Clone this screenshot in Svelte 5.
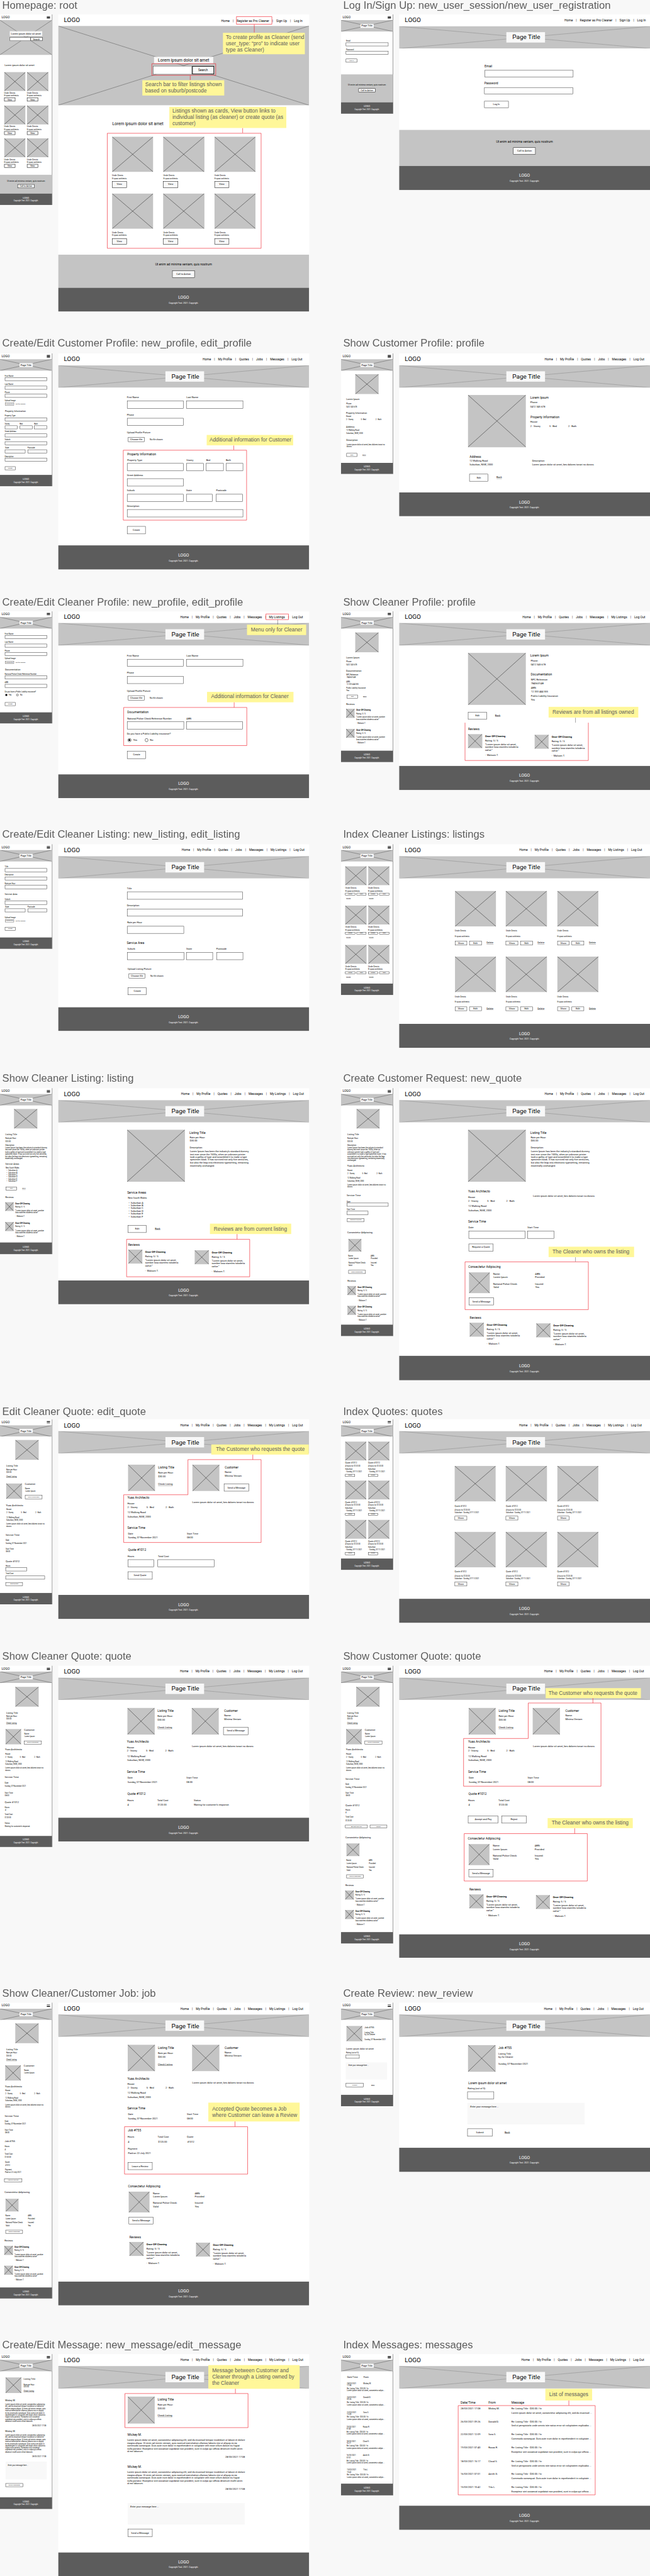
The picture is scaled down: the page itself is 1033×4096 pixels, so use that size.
<script lang="ts">
  // Drafting units: one column unit and one row unit in board pixels.
  const UX = 0.6378;

  const MENU_OUT = ['Home', 'Register as Pro Cleaner', 'Sign Up', 'Log In'];
  const MENU_CUSTOMER = ['Home', 'My Profile', 'Quotes', 'Jobs', 'Messages', 'Log Out'];
  const MENU_CLEANER = ['Home', 'My Profile', 'Quotes', 'Jobs', 'Messages', 'My Listings', 'Log Out'];

  // Cell builders: text, field, button, picture, text area, radio, nested stack.
  const T = (x, t, s = 's14', c = '') => ({ k: 't', x, t, s, c });
  const m = (x, t, s = 's10', c = '') => T(x, t, s, c);
  const F = (x, w, h = 23) => ({ k: 'f', x, w, h });
  const B = (x, w, h, t, s = 's14', c = '') => ({ k: 'b', x, w, h, t, s, c });
  const P = (x, w, h) => ({ k: 'p', x, w, h });
  const A = (x, w, h, s, pad, top) => ({ k: 'a', x, w, h, s, pad, top });
  const R = (x, on, small = false) => ({ k: 'r', x, on, small });
  const S = (x, rows) => ({ k: 's', x, rows });

  const QUOTE3 = '“Lorem ipsum dolor sit amet,\nsombre losa stamfes toloderia\ncafue.”';
  const QUOTE2 = '“Lorem ipsum dolor sit amet, sombre\nlosa stamfes toloderia cafue.”';
  const LOREM = 'Lorem ipsum dolor sit amet, bes dalores tonari no dororo.';
  const LOREM_M = 'Lorem ipsum dolor sit amet, bes dalores tonari no\ndororo.';
  const ABOUT = 'Lorem Ipsum has been the industry’s standard dummy\ntext ever since the 1500s, when an unknown printer\ntook a galley of type and scrambled it to make a type\nspecimen book. It has survived not only five centuries,\nbut also the leap into electronic typesetting, remaining\nessentially unchanged.';
  const ABOUT_N = 'Lorem Ipsum has been the industry’s standard\ndummy text ever since the 1500s, when an\nunknown printer took a galley of type and\nscrambled it to make a type specimen book. It has\nsurvived not only five centuries, but also the leap\ninto electronic typesetting, remaining essentially\nunchanged.';
  const MSG = 'Lorem ipsum dolor sit amet, consectetur adipiscing elit, sed do eiusmod tempor incididunt ut labore et dolore\nmagna aliqua. Ut enim ad minim veniam, quis nostrud exercitation ullamco laboris nisi ut aliquip ex ea\ncommodo consequat. Duis aute irure dolor in reprehenderit in voluptate velit esse cillum dolore eu fugiat\nnulla pariatur. Excepteur sint occaecat cupidatat non proident, sunt in culpa qui officia deserunt mollit anim\nid est laborum.';
  const MSG_M = 'Lorem ipsum dolor sit amet, consectetur adipiscing\nelit, sed do eiusmod tempor incididunt ut labore et\ndolore magna aliqua. Ut enim ad minim veniam, quis\nnostrud exercitation ullamco laboris nisi ut aliquip\nex ea commodo consequat. Duis aute irure dolor in\nreprehenderit in voluptate velit esse cillum dolore eu\nfugiat nulla pariatur. Excepteur sint occaecat\ncupidatat non proident, sunt in culpa qui officia\ndeserunt mollit anim id est laborum.';
  const SUBURBS = ['A', 'B', 'C', 'D', 'E', 'F'].map((l) => 'Suburban ' + l).join('\n');
  const DOTS = '•\n•\n•\n•\n•\n•';

  const reviewD = (x, y) => S(x, [
    [y, T(x, 'Once-Off Cleaning', 's14', 'bold')],
    [y + 13.5, T(x, 'Rating: 5 / 5')],
    [y + 25, T(x, QUOTE3)],
    [y + 58, T(x, '-  Malcom T.')]
  ]);
  const reviewsD = (x, y) => [
    [y, T(x, 'Reviews', 's18')],
    [y + 15, P(x, 68, 42), reviewD(x + 82, y + 22), S(x + 321, [[y + 17, P(x + 321, 68, 42)]]), reviewD(x + 403, y + 24)]
  ];
  const reviewsM = (x, y, step = 60) => [
    [y, m(x + 1, 'Reviews', 's13')],
    ...[0, step].map((d) => [y + 14 + d, P(x, 41, 27), S(x + 49, [
      [y + 18 + d, m(x + 49, 'Once-Off Cleaning', 's10', 'bold')],
      [y + 28 + d, m(x + 49, 'Rating: 5 / 5')],
      [y + 39.5 + d, m(x + 49, QUOTE2)],
      [y + 57 + d, m(x + 49, '-  Malcom T.')]
    ])])
  ];
  const listingHeadD = (x, y) => S(x, [
    [y, T(x, 'Listing Title', 's18')],
    [y + 17, T(x, 'Rate per Hour:')],
    [y + 28, T(x, '$30.00')],
    [y + 51, T(x, 'Check Listing', 's14', 'link')]
  ]);
  const partiesD = (x, y, button) => [
    [y, P(x, 131, 80), listingHeadD(x + 145, y + 9), P(x + 310, 131, 80), S(x + 463, [
      [y + 9, T(x + 467, 'Customer', 's18')],
      [y + 24, T(x + 467, 'Name:')],
      [y + 35, T(x + 467, 'Minima Veniam')],
      ...(button ? [[y + 58, B(x + 463, 120, 23, 'Send a Message')]] : [])
    ])]
  ];
  const propertyD = (x, y) => [
    [y, S(x, [
      [y, T(x, 'Yuas Architecto', 's18')],
      [y + 17.5, T(x, 'House')],
      [y + 29, T(x, '2 - Storey'), T(x + 92, '5 - Bed'), T(x + 184, '2 - Bath')],
      [y + 45, T(x + 1, '12 Walking Road')],
      [y + 57, T(x + 1, 'Suburban, NSW, 2000')]
    ]), S(x + 313, [[y + 14, T(x + 313, LOREM)]])]
  ];
  const serviceD = (x, y) => [
    [y, T(x, 'Service Time', 's18')],
    [y + 18.5, T(x + 3, 'Date'), T(x + 287, 'Start Time')],
    [y + 30.5, T(x + 3, 'Sunday, 07-November-2021'), T(x + 287, '08:00')]
  ];
  const cleanerD = (x, y) => [
    [y, T(x, 'Consectetur Adipiscing', 's18')],
    [y + 16.5, P(x + 3, 101, 63), S(x + 120, [
      [y + 22.5, T(x + 120, 'Name:'), T(x + 322, 'ABN:')],
      [y + 33, T(x + 121, 'Lorem Ipsum'), T(x + 322, 'Provided')],
      [y + 52.5, T(x + 120, 'National Police Check:'), T(x + 322, 'Insured:')],
      [y + 63, T(x + 121, 'Valid'), T(x + 323, 'Yes')]
    ])],
    [y + 93, B(x + 3, 120, 23, 'Send a Message')]
  ];
  const listingM = (x, y) => [
    [y, m(x, 'Listing Title', 's13')],
    [y + 11, m(x, 'Rate per Hour:')],
    [y + 19.5, m(x, '$30.00')],
    [y + 31.5, m(x, 'Check Listing', 's10', 'link')]
  ];
  const customerM = (x, y, button = true) => [
    [y, P(x, 76, 46), S(x + 90, [
      [y + 3, m(x + 90, 'Customer', 's14')],
      [y + 14.5, m(x + 91, 'Name:')],
      [y + 22.5, m(x + 92, 'Lorem Ipsum')],
      ...(button ? [[y + 35.5, B(x + 90, 84, 11, 'Send a Message', 's9')]] : [])
    ])]
  ];
  const propertyM = (x, y) => [
    [y, m(x, 'Yuas Architecto', 's14')],
    [y + 12, m(x + 1, 'House')],
    [y + 22, m(x + 1, '2 - Storey'), m(x + 72, '5 - Bed'), m(x + 141, '2 - Bath')],
    [y + 36, m(x + 1, '12 Walking Road')],
    [y + 43.5, m(x + 1, 'Suburban, NSW, 2000')],
    [y + 56, m(x + 1, LOREM_M)]
  ];
  const serviceM = (x, y) => [
    [y, m(x, 'Service Time', 's14')],
    [y + 16, m(x, 'Date')],
    [y + 25, m(x, 'Sunday, 07-November-2021')],
    [y + 42, m(x, 'Start Time')],
    [y + 50, m(x + 1, '08:00')]
  ];
  const cleanerM = (x, y) => [
    [y, m(x, 'Consectetur Adipiscing', 's14')],
    [y + 17.5, P(x + 5, 63, 39)],
    [y + 69, m(x + 4, 'Name:'), m(x + 112, 'ABN:')],
    [y + 77.5, m(x + 5, 'Lorem Ipsum'), m(x + 113, 'Provided')],
    [y + 90, m(x + 5, 'National Police Check:'), m(x + 113, 'Insured:')],
    [y + 98.5, m(x + 5, 'Valid'), m(x + 113, 'Yes')],
    [y + 112, B(x + 5, 83, 11, 'Send a Message', 's9')]
  ];
  const fieldM = (y, label, w = 205) => [[y, m(23, label)], [y + 5, F(23, w, 11)]];
  const uploadM = (y) => [
    [y, m(23, 'Upload Image')],
    [y + 6, B(25, 43, 8, 'Choose file', 's8', 'thin'), S(75, [[y + 10.5, m(75, 'No file chosen', 's9')]])]
  ];
  const uploadD = (x, y, label) => [
    [y, T(x, label)],
    [y + 13.5, B(x + 5, 80, 14, 'Choose file'), S(x + 110, [[y + 21, T(x + 110, 'No file chosen', 's12')]])]
  ];
  const stateM = (y) => [
    [y, m(24, 'State'), m(133, 'Postcode')],
    [y + 5, F(23, 100, 11), F(133, 95, 11)]
  ];
  const peopleD = (y) => [
    [y, T(613, 'First Name'), T(900, 'Last Name')],
    [y + 9.5, F(613, 274), F(899, 274)],
    [y + 51.5, T(613, 'Phone')],
    [y + 61, F(613, 274)],
    ...uploadD(613, y + 106, 'Upload Profile Picture')
  ];
  const cards = (xs, ys, make) => ys.map((y) => [y, ...xs.map((x) => S(x, make(x, y)))]);

  // Red outlines and connectors drawn over a frame.
  const rect = (x, y, r, b) => [x, y, r, y, r, b, x, b, x, y];
  const MESSAGES = [
    ['28/03/2021', '17:08', 'Mickey M.', 'Lorem ipsum dolor sit amet, consectetur adipiscing elit, sed do eiusmod ...', 1041, 960, 2],
    ['26/03/2021', '09:26', 'Donald D.', 'Sed ut perspiciatis unde omnis iste natus error sit voluptatem explicabo ...', 1081, 1005, 2],
    ['22/03/2021', '12:09', 'Sora S.', 'Commodo consequat. Duis aute irure dolor in reprehenderit in voluptate ...', 1122, 1051, 2],
    ['19/03/2021', '07:40', 'Roxas R.', 'Excepteur sint occaecat cupidatat non proident, sunt in culpa qui officia ...', 1163, 1097, 0],
    ['18/03/2021', '15:17', 'Cloud S.', 'Sed ut perspiciatis unde omnis iste natus error sit voluptatem explicabo ...', 1207, 1142, 0],
    ['16/03/2021', '07:01', 'Aerith G.', 'Commodo consequat. Duis aute irure dolor in reprehenderit in voluptate ...', 1247, 1188, 0],
    ['15/03/2021', '10:42', 'Tifa L.', 'Excepteur sint occaecat cupidatat non proident, sunt in culpa qui officia ...', 1288, 1233, 2]
  ];

  const sections = [
    {
      title: 'Homepage: root', drop: 27, y0: 43, right: false, home: true, menu: MENU_OUT, end: 1460,
      m: {
        foot: [584, 618], cta: 527,
        rows: [
          [197.5, m(22, 'Lorem ipsum dolor sit amet', 's14')],
          ...cards([20, 130], [217, 318, 417], (x, y) => [
            [y, P(x, 103, 57)],
            [y + 64, m(x, 'Unde Omnis', 's12')],
            [y + 72, m(x, 'Et quasi architecto.')],
            [y + 78, B(x, 54, 11, 'View', 's12', 'thick')]
          ])
        ]
      },
      d: {
        foot: [868, 940], cta: 768,
        rows: [
          [374, T(542, 'Lorem ipsum dolor sit amet', 's24')],
          ...cards([541, 788, 1035], [412, 584], (x, y) => [
            [y, P(x, 198, 106)],
            [y + 117.5, T(x, 'Unde Omnis', 's12')],
            [y + 126, T(x, 'Et quasi architecto.', 's10')],
            [y + 135, B(x, 71, 19, 'View', 's14', 'thick')]
          ])
        ],
        red: [rect(1141, 50, 1312, 73), [1227, 74, 1227, 98], rect(733, 192, 1041, 227), [918, 228, 918, 242], rect(518, 402, 1260, 749), [1171, 386, 1171, 401]],
        notes: [
          [1076, 99, 395, 65, 14, 'To create profile as Cleaner (send\nuser_type: “pro” to indicate user\ntype as Cleaner)'],
          [687, 242, 395, 46, 14, 'Search bar to filter listings shown\nbased on suburb/postcode'],
          [818, 322, 563, 64, 14, 'Listings shown as cards, View button links to\nindividual listing (as cleaner) or create quote (as\ncustomer)']
        ]
      }
    },
    {
      title: 'Log In/Sign Up: new_user_session/new_user_registration', drop: 27, y0: 42, right: true, menu: MENU_OUT, end: 1548,
      m: {
        foot: [308, 342], cta: 223,
        rows: [
          [123, m(102, 'Email')], [127, F(101, 205, 11)],
          [148, m(102, 'Password')], [153, F(101, 205, 11)],
          [176, B(101, 54, 11, 'Log In', 's9')]
        ]
      },
      d: {
        foot: [500, 572], cta: 391,
        rows: [
          [199, T(770, 'Email', 's18')], [211, F(770, 428, 21)],
          [251, T(769, 'Password', 's18')], [263, F(769, 428, 20)],
          [304, B(769, 117, 20, 'Log In')]
        ]
      }
    },
    {
      title: 'Create/Edit Customer Profile: new_profile, edit_profile', drop: 31.8, y0: 1066, right: false, menu: MENU_CUSTOMER, end: 1459,
      m: {
        foot: [1433, 1467],
        rows: [
          ...fieldM(1134, 'First Name'), ...fieldM(1159, 'Last Name'), ...fieldM(1184, 'Phone'), ...uploadM(1209),
          [1242, m(24, 'Property Information', 's13')],
          ...fieldM(1255, 'Property Type'),
          [1279, m(23, 'Storey'), m(95, 'Bed'), m(165, 'Bath')],
          [1284, F(23, 62, 11), F(95, 62, 11), F(165, 62, 11)],
          ...fieldM(1303, 'Street Address'), ...fieldM(1327, 'Suburb'), ...stateM(1351), ...fieldM(1377, 'Description'),
          [1407, B(23, 53, 11, 'Create', 's9')]
        ]
      },
      d: {
        foot: [1645, 1718],
        rows: [
          ...peopleD(1200),
          [1370, T(614, 'Property Information', 's18')],
          [1389, T(614, 'Property Type'), T(900, 'Storey'), T(995, 'Bed'), T(1090, 'Bath')],
          [1398, F(613, 274), F(900, 84), F(995, 84), F(1090, 83)],
          [1435, T(613, 'Street Address')], [1444, F(613, 274)],
          [1481, T(613, 'Suburb'), T(898, 'State'), T(1043, 'Postcode')],
          [1491, F(613, 274), F(898, 128), F(1043, 128)],
          [1528, T(613, 'Description')], [1537, F(613, 560)],
          [1588, B(613, 90, 23, 'Create')]
        ],
        red: [rect(595, 1358, 1190, 1569), [1128, 1344, 1128, 1357]],
        notes: [[997, 1312, 417, 32, 14, 'Additional information for Customer']]
      }
    },
    {
      title: 'Show Customer Profile: profile', drop: 31.8, y0: 1066, right: true, menu: MENU_CUSTOMER, end: 1541,
      m: {
        foot: [1396, 1430],
        rows: [
          [1129, P(146, 113, 60)],
          [1206, m(103, 'Lorem Ipsum', 's13')], [1218, m(103, 'Phone:')], [1227, m(103, '0412 345 678')],
          [1247, m(102, 'Property Information', 's13')], [1257, m(102, 'House')],
          [1266, m(102, '2 - Storey'), m(173, '5 - Bed'), m(244, '2 - Bath')],
          [1289, m(102, 'Address', 's13')], [1299, m(103, '12 Walking Road')], [1307.5, m(103, 'Suburban, NSW, 2000')],
          [1329, m(103, 'Description', 's13')], [1341, m(104, LOREM_M)],
          [1367, B(103, 53, 11, 'Edit', 's9'), S(181, [[1373, m(181, 'Back', 's9', 'link')]])]
        ]
      },
      d: {
        foot: [1486, 1557],
        rows: [
          [1192, P(690, 279, 157), S(991, [
            [1200, T(991, 'Lorem Ipsum', 's18')], [1216, T(991, 'Phone:')], [1227, T(991, '0412 345 678')],
            [1258, T(992, 'Property Information', 's18')], [1274, T(991, 'House')],
            [1286, T(991, '2 - Storey'), T(1083, '5 - Bed'), T(1174, '2 - Bath')]
          ])],
          [1378, T(698, 'Address', 's18')],
          [1392, T(698, '12 Walking Road'), T(1000, 'Description')],
          [1402.5, T(698, 'Suburban, NSW, 2000'), T(1000, LOREM)],
          [1430, B(697, 91, 22, 'Edit'), S(828, [[1441, T(828, 'Back', 's14', 'link')]])]
        ]
      }
    },
    {
      title: 'Create/Edit Cleaner Profile: new_profile, edit_profile', drop: 28.6, y0: 276, right: false, menu: MENU_CLEANER, end: 1462,
      m: {
        foot: [581, 615],
        rows: [
          ...fieldM(344, 'First Name'), ...fieldM(369, 'Last Name'), ...fieldM(395, 'Phone'), ...uploadM(420),
          [452, m(24, 'Documentation', 's13')],
          ...fieldM(465.5, 'National Police Check Reference Number'), ...fieldM(491, 'ABN'),
          [518.5, m(23, 'Do you have a Public Liability insurance?')],
          [529, R(25, true, true), m(42, 'Yes'), R(79, false, true), m(97, 'No')],
          [551, B(23, 53, 11, 'Create', 's9')]
        ]
      },
      d: {
        foot: [768, 840],
        rows: [
          ...peopleD(411),
          [580, T(614, 'Documentation', 's18')],
          [600, T(614, 'National Police Check Reference Number'), T(900, 'ABN')],
          [609, F(614, 274), F(900, 271)],
          [646, T(613, 'Do you have a Public Liability insurance?')],
          [665, R(617, true), T(643, 'Yes'), R(699, false), T(724, 'No')],
          [698, B(614, 91, 23, 'Create')]
        ],
        red: [rect(1283, 284, 1392, 301), rect(597, 566, 1191, 681), [1130, 550, 1130, 566]],
        lead: [[1340, 301, 1340, 317]],
        notes: [
          [1192, 317, 285, 31, 19, 'Menu only for Cleaner'],
          [999, 519, 417, 32, 20, 'Additional information for Cleaner']
        ]
      }
    },
    {
      title: 'Show Cleaner Profile: profile', drop: 28.6, y0: 276, right: true, menu: MENU_CLEANER, end: 1545,
      m: {
        foot: [697, 731],
        rows: [
          [340, P(146, 113, 60)],
          [417, m(103, 'Lorem Ipsum', 's13')], [429, m(103, 'Phone:')], [437, m(103, '0412 345 678')],
          [457, m(102, 'Documentation', 's13')], [469, m(103, 'NPC Reference:')], [477, m(104, '7845631AB')],
          [489, m(103, 'ABN:')], [497, m(104, '12 333 444 555')],
          [508, m(103, 'Public Liability Insurance:')], [515.5, m(103, 'Yes')],
          [528, B(106, 53, 11, 'Edit', 's9'), S(184, [[534, m(184, 'Back', 's9', 'link')]])],
          ...reviewsM(102, 557)
        ]
      },
      d: {
        foot: [743, 815],
        rows: [
          [402, P(691, 279, 157), S(991, [
            [411, T(991, 'Lorem Ipsum', 's18')], [426, T(993, 'Phone:')], [437, T(993, '0412 345 678')],
            [468, T(993, 'Documentation', 's18')], [483, T(994, 'NPC Reference:')], [494, T(994, '7845631AB')],
            [509, T(994, 'ABN:')], [519, T(995, '12 333 444 555')],
            [533, T(994, 'Public Liability Insurance:')], [544, T(994, 'Yes')]
          ])],
          [580, B(691, 90, 23, 'Edit'), S(821, [[591, T(821, 'Back', 's14', 'link')]])],
          ...reviewsD(691, 632)
        ],
        red: [[676, 612, 676, 726, 1271, 726, 1271, 612]],
        lead: [[1209, 597, 1209, 612]],
        notes: [[1079, 565, 433, 32, 19, 'Reviews are from all listings owned']]
      }
    },
    {
      title: 'Create/Edit Cleaner Listing: new_listing, edit_listing', drop: 32, y0: 979, right: false, menu: MENU_CLEANER, end: 1469,
      m: {
        foot: [1260, 1295],
        rows: [
          ...fieldM(1047, 'Title'), ...fieldM(1072, 'Description'), ...fieldM(1098, 'Rate per Hour'),
          [1131, m(23, 'Service Area', 's13')],
          ...fieldM(1145, 'Suburb'), ...stateM(1168), ...uploadM(1200),
          [1229, B(23, 53, 11, 'Create', 's9')]
        ]
      },
      d: {
        foot: [1471, 1543],
        rows: [
          [1113, T(613, 'Title')], [1122.5, F(613, 558)],
          [1164.5, T(613, 'Description')], [1174, F(613, 558)],
          [1216, T(614, 'Rate per Hour')], [1226, F(614, 274)],
          [1277.5, T(612, 'Service Area', 's18')],
          [1296, T(615, 'Suburb'), T(899, 'State'), T(1044, 'Postcode')],
          [1305, F(615, 274), F(899, 129), F(1044, 129)],
          ...uploadD(616, 1356, 'Upload Listing Picture'),
          [1411, B(617, 91, 23, 'Create')]
        ]
      }
    },
    {
      title: 'Index Cleaner Listings: listings', drop: 32, y0: 979, right: true, menu: MENU_CLEANER, end: 1530,
      m: {
        foot: [1399, 1434],
        rows: cards([98, 208], [1046, 1164, 1283], (x, y) => [
          [y, P(x, 103, 57)],
          [y + 65, m(x, 'Unde Omnis', 's12')],
          [y + 74, m(x, 'Et quasi architecto.')],
          [y + 80.5, B(x, 48, 7.5, 'Show', 's9'), B(x + 54, 48, 7.5, 'Edit', 's9')],
          [y + 96.5, m(x + 5, 'Delete', 's9', 'link')]
        ])
      },
      d: {
        foot: [1521, 1593],
        rows: cards([627, 873, 1121], [1120, 1318], (x, y) => [
          [y, P(x, 198, 107)],
          [y + 121.5, T(x, 'Unde Omnis', 's12')],
          [y + 137.5, T(x, 'Et quasi architecto.', 's10')],
          [y + 151, B(x, 59, 13, 'Show'), B(x + 70, 59, 13, 'Edit'), S(x + 153, [[y + 157.5, T(x + 153, 'Delete', 's14', 'link')]])]
        ])
      }
    },
    {
      title: 'Show Cleaner Listing: listing', drop: 30.6, y0: 147, right: false, menu: MENU_CLEANER, end: 1466,
      m: {
        foot: [613, 648],
        rows: [
          [210, P(68, 113, 59)],
          [287, m(26, 'Listing Title', 's13')], [299, m(26, 'Rate per Hour:')], [308, m(26, '$30.00')],
          [319, m(26, 'Description:')], [327, m(25, ABOUT)],
          [377, m(26, 'Service Areas', 's13')], [388, m(27, 'New South Wales')],
          [396, m(32, DOTS, 's10'), m(40, SUBURBS)],
          [445, B(28, 54, 11, 'Edit', 's9'), S(107, [[450.5, m(107, 'Back', 's9', 'link')]])],
          ...reviewsM(25, 477)
        ]
      },
      d: {
        foot: [727, 799],
        rows: [
          [272, P(614, 279, 157), S(914, [
            [281, T(914, 'Listing Title', 's18')], [296.5, T(916, 'Rate per Hour:')], [307.5, T(916, '$30.00')],
            [326.5, T(916, 'Description:')], [338.5, T(917, ABOUT)]
          ])],
          [462, T(614, 'Service Areas', 's18')],
          [479, T(617, 'New South Wales')],
          [493, T(621, DOTS), T(631, SUBURBS)],
          [561, B(617, 91, 22, 'Edit'), S(748, [[571.5, T(748, 'Back', 's14', 'link')]])],
          ...reviewsD(619, 619.5)
        ],
        red: [rect(611, 603, 1205, 716), [1144, 587, 1144, 603]],
        notes: [[1013, 556, 392, 31, 19, 'Reviews are from current listing']]
      }
    },
    {
      title: 'Create Customer Request: new_quote', drop: 30.6, y0: 147, right: true, menu: MENU_CUSTOMER, end: 1541,
      m: {
        foot: [860, 895],
        rows: [
          [210, P(152, 112, 59)],
          [287, m(108, 'Listing Title', 's13')], [299, m(108, 'Rate per Hour:')], [308, m(108, '$30.00')],
          [319, m(108, 'Description:')], [327, m(108, ABOUT_N)],
          ...propertyM(107, 383),
          [472, m(105, 'Service Time', 's14')],
          [489, m(105, 'Date')], [493, F(105, 201, 11)],
          [514, m(105, 'Start Time')], [518, F(105, 103, 11)],
          [540, B(107, 83, 11, 'Request a Quote', 's9')],
          ...cleanerM(108, 584),
          ...reviewsM(108, 730)
        ]
      },
      d: {
        foot: [955, 1028],
        rows: [
          [272, P(691, 279, 157), S(991, [
            [281, T(991, 'Listing Title', 's18')], [296.5, T(993, 'Rate per Hour:')], [307.5, T(993, '$30.00')],
            [326.5, T(993, 'Description:')], [338.5, T(994, ABOUT)]
          ])],
          ...propertyD(691, 459),
          [550, T(691, 'Service Time', 's18')],
          [568, T(693, 'Date'), T(977, 'Start Time')],
          [577.5, F(693, 274), F(977, 129)],
          [616, B(693, 120, 23, 'Request a Quote')],
          ...cleanerD(692, 686),
          ...reviewsD(699, 839.5)
        ],
        red: [rect(676, 671, 1271, 815)],
        lead: [[1209, 657, 1209, 670]],
        notes: [[1079, 625, 412, 32, 19, 'The Cleaner who owns the listing']]
      }
    },
    {
      title: 'Edit Cleaner Quote: edit_quote', drop: 24.4, y0: 1146, right: false, menu: MENU_CLEANER, end: 1462,
      m: {
        foot: [1670, 1704],
        rows: [
          [1208, P(73, 113, 60)],
          ...listingM(30, 1287), ...customerM(30, 1340), ...propertyM(29, 1406.5), ...serviceM(27, 1496),
          [1575, m(27, 'Quote #1012', 's14')],
          [1589, m(27, 'Hours')], [1593, F(27, 103, 11)],
          [1613, m(27, 'Total Cost')], [1618, F(27, 190, 11)],
          [1639, B(27, 83, 10, 'Send Quote', 's9')]
        ]
      },
      d: {
        foot: [1676, 1748],
        rows: [
          ...partiesD(618, 1282.5, true), ...propertyD(615, 1383), ...serviceD(615, 1473.5),
          [1540, T(618, 'Quote #1012', 's18')],
          [1560, T(616, 'Hours'), T(762, 'Total Cost')],
          [1569.5, F(616, 128, 22), F(761, 274, 22)],
          [1605.5, B(616, 120, 23, 'Send Quote')]
        ],
        red: [[597, 1374, 907, 1374, 907, 1268, 1260, 1268, 1260, 1518, 597, 1518, 597, 1374], [1220, 1252, 1220, 1268]],
        notes: [[1019, 1222, 471, 30, 23, 'The Customer who requests the quote']]
      }
    },
    {
      title: 'Index Quotes: quotes', drop: 24.4, y0: 1146, right: true, menu: MENU_CLEANER, end: 1529,
      m: {
        foot: [1566, 1600],
        rows: cards([97, 208], [1213, 1331, 1449], (x, y) => [
          [y, P(x, 103, 57)],
          [y + 65.5, m(x, 'Quote #1012', 's12')],
          [y + 74, m(x, '4 hours for $120.00')],
          [y + 82.5, m(x, 'Suburban')],
          [y + 91, m(x + 2, '- Sunday, 07/11/2021')],
          [y + 98.5, B(x, 48, 7.5, 'Show', 's9')]
        ])
      },
      d: {
        foot: [1688, 1760],
        rows: cards([626, 873, 1121], [1287, 1486], (x, y) => [
          [y, P(x, 198, 107)],
          [y + 120.5, T(x, 'Quote #1012', 's12')],
          [y + 132, T(x, '4 hours for $120.00', 's10')],
          [y + 140.5, T(x, 'Suburban - Sunday, 07/11/2021', 's10')],
          [y + 151, B(x, 59, 12, 'Show')]
        ])
      }
    },
    {
      title: 'Show Cleaner Quote: quote', drop: 30, y0: 321.5, right: false, menu: MENU_CLEANER, end: 1461,
      m: {
        foot: [835, 868],
        rows: [
          [385, P(73, 113, 60)],
          ...listingM(30, 463.5), ...customerM(26, 512.5), ...propertyM(24, 575),
          ...serviceM(23, 659.5).slice(0, 3),
          [706, m(23, 'Start Time')], [713, m(23, '08:00')],
          [735, m(23, 'Quote #1012', 's14')],
          [750, m(23, 'Hours')], [758, m(24, '4')],
          [771, m(23, 'Total Cost')], [781, m(23, '$120.00')],
          [797, m(23, 'Status')], [807, m(23, 'Waiting for customer’s response.')]
        ]
      },
      d: {
        foot: [780, 852],
        rows: [
          ...partiesD(615, 449, true), ...propertyD(613, 551), ...serviceD(613, 642),
          [708, T(615, 'Quote #1012', 's18')],
          [729, T(614, 'Hours'), T(759, 'Total Cost'), T(935, 'Status')],
          [742, T(615, '4'), T(761, '$120.00'), T(935, 'Waiting for customer’s response.')]
        ]
      }
    },
    {
      title: 'Show Customer Quote: quote', drop: 30, y0: 321.5, right: true, menu: MENU_CUSTOMER, end: 1539,
      m: {
        foot: [1125, 1159],
        rows: [
          [385, P(150, 113, 60)],
          ...listingM(107, 463.5), ...customerM(102, 512.5), ...propertyM(101, 575),
          [664, m(99, 'Service Time', 's14')], [680, m(99, 'Date')], [689, m(99, 'Sunday, 07-November-2021')],
          [706, m(99, 'Start Time')], [714, m(100, '08:00')],
          [743, m(99, 'Quote #1012', 's14')],
          [757, m(99, 'Hours')], [765, m(99, '4')],
          [779, m(99, 'Total Cost')], [789, m(99, '$120.00')],
          [802, B(98, 108, 10, 'Accept and Pay', 's9'), B(216, 84, 10, 'Reject', 's9')],
          ...cleanerM(99, 840),
          ...reviewsM(98, 986, 59)
        ]
      },
      d: {
        foot: [1132, 1203],
        rows: [
          ...partiesD(693, 449, false), ...propertyD(691, 551), ...serviceD(691, 642),
          [708, T(693, 'Quote #1012', 's18')],
          [729, T(691, 'Hours'), T(837, 'Total Cost')],
          [742.5, T(693, '4'), T(839, '$120.00')],
          [774, B(690, 147, 23, 'Accept and Pay'), B(852, 121, 23, 'Reject')],
          ...cleanerD(690, 843.5),
          ...reviewsD(697, 997)
        ],
        red: [[669, 541, 981, 541, 981, 434, 1332, 434, 1332, 685, 669, 685, 669, 541], [1293, 419, 1293, 434], rect(672, 828, 1266, 971), [1205, 812, 1205, 828]],
        notes: [
          [1065, 389, 459, 31, 14, 'The Customer who requests the quote'],
          [1074, 781, 412, 31, 20, 'The Cleaner who owns the listing']
        ]
      }
    },
    {
      title: 'Show Cleaner/Customer Job: job', drop: 29.6, y0: 1338, right: false, menu: MENU_CLEANER, end: 1463,
      m: {
        foot: [2197, 2231],
        rows: [
          [1400, P(73, 113, 60)],
          ...listingM(30, 1479), ...customerM(25, 1527, false), ...propertyM(24, 1590.5), ...serviceM(23, 1680),
          [1758, m(23, 'Job #755', 's14')],
          [1772, m(23, 'Hours')], [1781, m(23, '4')],
          [1795, m(23, 'Total Cost')], [1804, m(23, '$120.00')],
          [1819, m(24, 'Quote')], [1828, m(25, '#1012')],
          [1842, m(24, 'Payment')], [1851, m(24, 'Paid on 22-July-2021')],
          [1869, B(21, 85, 11, 'Leave a Review', 's9')],
          ...cleanerM(22, 1912),
          ...reviewsM(21, 2058, 60)
        ]
      },
      d: {
        foot: [2179.5, 2251],
        rows: [
          ...partiesD(617, 1465, false), ...propertyD(615, 1567), ...serviceD(615, 1657),
          [1723, T(617, 'Job #755', 's18')],
          [1744, T(616, 'Hours'), T(761, 'Total Cost'), T(902, 'Quote')],
          [1758.5, T(617, '4'), T(763, '$120.00'), T(904, '#1012')],
          [1780, T(617, 'Payment')],
          [1793, T(618, 'Paid on 22-July-2021')],
          [1820, B(616, 120, 23, 'Leave a Review')],
          ...cleanerD(618, 1891.5),
          ...reviewsD(625, 2045.5)
        ],
        red: [rect(601, 1712.5, 1195, 1855.5), [1134, 1695, 1134, 1712]],
        notes: [[1005, 1640, 441, 56, 19, 'Accepted Quote becomes a Job\nwhere Customer can leave a Review']]
      }
    },
    {
      title: 'Create Review: new_review', drop: 29.6, y0: 1338, right: true, menu: MENU_CUSTOMER, end: 1538,
      m: {
        foot: [1616, 1650],
        rows: [
          [1408, P(104, 76, 46), S(191, [
            [1414, m(191, 'Job #755', 's13')], [1429, m(191, 'Listing Title')],
            [1435.5, m(191, 'by Za Cleaner')], [1449, m(191, 'Sunday, 07-November-2021')]
          ])],
          [1478, m(102, 'Lorem ipsum dolor sit amet', 's13')],
          [1490, m(102, 'Rating (out of 5):')],
          [1496, F(101, 66, 10)],
          [1518, A(101, 199, 52, 's10', 12, 9)],
          [1581, B(101, 85, 12, 'Submit', 's9'), S(223, [[1587.5, m(223, 'Back', 's9', 'link')]])]
        ]
      },
      d: {
        foot: [1776, 1848.5],
        rows: [
          [1466.5, P(691, 132, 80), S(837, [
            [1475, T(837, 'Job #755', 's18')], [1493, T(837, 'Listing Title')],
            [1503, T(837, 'by Za Cleaner')], [1523, T(837, 'Sunday, 07-November-2021')]
          ])],
          [1581.5, T(692, 'Lorem ipsum dolor sit amet', 's18')],
          [1598, T(689, 'Rating (out of 5):')],
          [1606, F(688, 128, 23)],
          [1641, A(688, 565, 64, 's14', 13, 11)],
          [1718.5, B(688, 120, 23, 'Submit'), S(867, [[1730, T(867, 'Back', 's14', 'link')]])]
        ]
      }
    },
    {
      title: 'Create/Edit Message: new_message/edit_message', drop: 29.3, y0: 868, right: false, late: true, menu: MENU_CLEANER, end: 1463,
      m: {
        foot: [1319, 1356],
        rows: [
          [941, P(27, 76, 49), S(114, [
            [948, m(114, 'Listing Title', 's13')], [964, m(114, 'Rate per Hour:')],
            [970.5, m(114, '$30.00')], [985, m(114, 'Check Listing', 's10', 'link')]
          ])],
          [1014.5, m(25, 'Mickey M.', 's13')], [1026.5, m(25, MSG_M)], [1094, m(155, '28/03/2021 17:08')],
          [1111, m(25, 'Mickey M.', 's13')], [1123.5, m(25, MSG_M)], [1190.5, m(155, '28/03/2021 17:08')],
          [1207, A(27, 199, 56, 's10', 11, 11)],
          [1275, B(27, 84, 12, 'Send a Message', 's9')]
        ]
      },
      d: {
        foot: [1493, 1568],
        rows: [
          [1002, P(616, 130, 85), listingHeadD(761, 1012)],
          [1123, T(616, 'Mickey M.', 's18')], [1140, T(614, MSG)], [1193, T(1087, '28/03/2021 17:08')],
          [1224, T(616, 'Mickey M.', 's18')], [1241, T(614, MSG)], [1295, T(1087, '28/03/2021 17:08')],
          [1338, A(616, 565, 67, 's14', 13, 12)],
          [1419, B(616, 120, 25, 'Send a Message')]
        ],
        red: [rect(603, 992.5, 1197, 1100), [1136, 977, 1136, 992]],
        notes: [[1005, 902, 441, 75, 19, 'Message between Customer and\nCleaner through a Listing owned by\nthe Cleaner']]
      }
    },
    {
      title: 'Index Messages: messages', drop: 29.3, y0: 868, right: true, late: true, menu: MENU_CLEANER, end: 1540,
      m: {
        foot: [1276, 1313],
        rows: [
          [942, m(107, 'Date/Time', 's13'), m(186, 'From', 's13')],
          ...MESSAGES.flatMap(([day, time, from, , , y, dx]) => [
            [y, m(104 + dx, day), m(183 + dx, from)],
            [y + 6.5, m(104 + dx, time)],
            [y + 16, m(104 + dx, 'Re: Listing Title - $30.00 / hr')],
            [y + 23, m(104 + dx, 'Lorem ipsum dolor sit amet, consectetur adipis ...')]
          ])
        ]
      },
      d: {
        foot: [1346, 1422],
        rows: [
          [1020, T(655, 'Date/Time', 's18'), T(789, 'From', 's18'), T(900, 'Message', 's18')],
          ...MESSAGES.flatMap(([day, time, from, text, y]) => [
            [y, T(655, day + ' ' + time), T(789, from), T(900, 'Re: Listing Title - $30.00 / hr')],
            [y + 13.5, T(900, text)]
          ])
        ],
        red: [rect(643, 1030.5, 1304, 1312), [1177, 1014, 1177, 1030]],
        notes: [[1063, 977, 226, 37, 19, 'List of messages']]
      }
    }
  ];

  // Board tracks: top margin row, then the distance between frame tops.
  const tops = [44, 1087.8, 1881.6, 2599, 3350, 4369.4, 5128, 6165.3, 7247.5, 7981];
  const tracks = tops.slice(0, -1).map((t, i) => tops[i + 1] - t + (i === 0 ? -6 : 0)).map((h) => h + 'px').join(' ');

  const bar = (s, kind) => (kind === 'm' ? 18 : s.home ? 35 : s.late ? 37 : 36);
  const banner = (s, kind) => (s.home ? (kind === 'm' ? 104.5 : 239) : s.late ? (kind === 'm' ? 36 : 71) : kind === 'm' ? 34 : 67);
  const scaleY = (s) => (s.late ? 0.9764 : 1.0204);
</script>

{#snippet cross()}
  <svg class="cross"><line x1="0" y1="0" x2="100%" y2="100%" /><line x1="0" y1="100%" x2="100%" y2="0" /></svg>
{/snippet}

{#snippet cell(c, y, uy)}
  {#if c.k === 't'}
    <div class="txt {c.s} {c.c}">{c.t}</div>
  {:else if c.k === 'f'}
    <div class="field" style:width="{c.w * UX}px" style:height="{c.h * uy}px"></div>
  {:else if c.k === 'b'}
    <div class="btn {c.s} {c.c}" style:width="{c.w * UX}px" style:height="{c.h * uy}px">{c.t}</div>
  {:else if c.k === 'p'}
    <div class="pic" style:width="{c.w * UX}px" style:height="{c.h * uy}px">{@render cross()}</div>
  {:else if c.k === 'a'}
    <div class="area" style:width="{c.w * UX}px" style:height="{c.h * uy}px" style:padding="{c.top * uy}px 0 0 {c.pad * UX}px">
      <div class="txt {c.s}">Enter your message here ...</div>
    </div>
  {:else if c.k === 'r'}
    <div class="radio" class:on={c.on} class:small={c.small}></div>
  {:else}
    {@render stack(c.rows, c.x, y, uy)}
  {/if}
{/snippet}

{#snippet stack(rows, ox, oy, uy)}
  <div class="stack" style:padding-top="{Math.max(0, rows[0][0] - oy) * uy}px">
    {#each rows as [y, ...cells], i}
      <div class="line" style:height={i < rows.length - 1 ? (rows[i + 1][0] - y) * uy + 'px' : 'auto'} style:padding-left="{(cells[0].x - ox) * UX}px">
        {#each cells as c, j}
          <div class="cell" style:width={j < cells.length - 1 ? (cells[j + 1].x - c.x) * UX + 'px' : 'auto'}>
            {@render cell(c, y, uy)}
          </div>
        {/each}
      </div>
    {/each}
  </div>
{/snippet}

{#snippet frame(s, kind)}
  {@const f = s[kind]}
  {@const uy = scaleY(s)}
  {@const x0 = kind === 'm' ? (s.right ? 77 : 0) : s.right ? 358 : 281}
  {@const top = s.y0 + bar(s, kind) + banner(s, kind)}
  <article class="frame {kind}">
    <header style:height="{bar(s, kind) * uy}px">
      <span class="logo">LOGO</span>
      {#if kind === 'm'}
        <span class="burger"><i></i><i></i><i></i></span>
      {:else}
        <nav class:low={s.home} style:padding-right="{(x0 + 1210 - s.end) * UX}px">
          {#each s.menu as item, i}
            {#if i}<span>|</span>{/if}<span>{item}</span>
          {/each}
        </nav>
      {/if}
    </header>
    <div class="banner" class:home={s.home} style:height="{banner(s, kind) * uy}px">
      {@render cross()}
      {#if s.home}
        <div class="tagline">Lorem ipsum dolor sit amet</div>
        <div class="search"><span class="box"></span><span class="go">Search</span></div>
      {:else}
        <div class="pagetitle">Page Title</div>
      {/if}
    </div>
    <div class="body" style:height="{((f.cta ?? f.foot[0]) - top) * uy}px">
      {@render stack(f.rows, x0, top, uy)}
    </div>
    {#if f.cta}
      <div class="cta" style:height="{(f.foot[0] - f.cta) * uy}px">
        <span>Ut enim ad minima veniam, quis nostrum</span>
        <span class="action">Call to Action</span>
      </div>
    {/if}
    <footer style:height="{(f.foot[1] - f.foot[0]) * uy}px">
      <strong>LOGO</strong>
      <small>Copyright Text. 2021. Copyright.</small>
    </footer>
    {#if f.notes}
      <svg class="marks">
        {#each f.red as p}
          <polyline points={p.map((v, i) => (i % 2 ? (v - s.y0) * uy : (v - x0) * UX).toFixed(2)).join(' ')} />
        {/each}
        {#each f.lead ?? [] as p}
          <polyline class="lead" points={p.map((v, i) => (i % 2 ? (v - s.y0) * uy : (v - x0) * UX).toFixed(2)).join(' ')} />
        {/each}
      </svg>
      {#each f.notes as [x, y, w, h, pad, text]}
        <div
          class="note"
          style:left="{(x - x0) * UX}px"
          style:top="{(y - s.y0) * uy}px"
          style:width="{w * UX}px"
          style:height="{h * uy}px"
          style:padding-left="{pad * UX}px">{text}</div>
      {/each}
    {/if}
  </article>
{/snippet}

<div class="window">
  <main class="board" style:grid-template-rows={tracks}>
    {#each sections as s}
      <section class:first={s.y0 < 50}>
        <h2 style:--drop="{s.drop}px">{s.title}</h2>
        <div class="frames">
          {@render frame(s, 'm')}
          {@render frame(s, 'd')}
        </div>
      </section>
    {/each}
  </main>
</div>

<style>
  :global(body) {
    margin: 0;
    background: #f8f8f8;
  }
  .window {
    width: 1033px;
    height: 4096px;
    overflow: hidden;
    background: #f8f8f8;
  }
  .board {
    --pt: 0.536px;
    width: 2000px;
    height: 7931px;
    transform: scale(0.5165);
    transform-origin: 0 0;
    display: grid;
    grid-template-columns: 1049px 951px;
    font-family: Roboto, sans-serif;
    color: #000;
  }
  section {
    display: flex;
    flex-direction: column;
    min-width: 0;
  }
  h2 {
    flex: none;
    box-sizing: border-box;
    height: 50px;
    margin: 0;
    padding: calc(32px - var(--drop)) 0 0 7px;
    font: 400 32.2px/36px 'Liberation Sans', Arial, sans-serif;
    color: #5c5c5c;
    white-space: nowrap;
  }
  .first h2 {
    height: 44px;
    padding-top: 0;
    line-height: 34px;
  }
  .frames {
    display: flex;
    align-items: flex-start;
    gap: 18px;
  }
  .frame {
    position: relative;
    flex: none;
    display: flex;
    flex-direction: column;
    background: #fff;
  }
  .frame.d {
    width: 771.7px;
  }
  .frame.m {
    width: 160px;
    border-right: 1px solid #444;
  }
  header {
    flex: none;
    display: flex;
    align-items: center;
    justify-content: space-between;
  }
  .logo {
    padding-left: 17.6px;
    font-size: calc(36 * var(--pt));
    line-height: 20px;
  }
  .m .logo {
    padding-left: 5px;
    font-size: calc(18 * var(--pt));
    line-height: 10px;
  }
  nav {
    display: flex;
    gap: 9.7px;
    font-size: calc(18 * var(--pt));
    line-height: 12px;
    white-space: nowrap;
  }
  nav.low {
    padding-top: 5px;
  }
  .burger {
    display: flex;
    flex-direction: column;
    gap: 1.3px;
    width: 10px;
    margin-right: 6px;
  }
  .burger i {
    height: 1.5px;
    background: #000;
  }
  .banner {
    position: relative;
    flex: none;
    box-sizing: border-box;
    display: flex;
    flex-direction: column;
    align-items: center;
    justify-content: center;
    background: #c4c4c4;
  }
  .d .banner:not(.home) {
    padding-left: 7px;
  }
  .banner .cross line {
    stroke: #555;
  }
  .d .banner:not(.home) .cross line {
    stroke: #888;
  }
  .cross {
    position: absolute;
    left: 0;
    top: 0;
    width: 100%;
    height: 100%;
    display: block;
  }
  .cross line {
    stroke: #222;
    stroke-width: 1;
  }
  .pagetitle,
  .tagline,
  .search {
    position: relative;
    display: flex;
    align-items: center;
    justify-content: center;
    box-sizing: border-box;
  }
  .pagetitle {
    width: 118.5px;
    height: 32px;
    padding-left: 4px;
    background: #f8f8f8;
    font-size: calc(36 * var(--pt));
  }
  .m .pagetitle {
    width: 41px;
    height: 12px;
    padding-left: 0;
    font-size: calc(14 * var(--pt));
  }
  .home {
    justify-content: flex-start;
  }
  .d .home {
    padding-top: 95px;
  }
  .m .home {
    padding-top: 33.5px;
  }
  .tagline {
    width: 182.4px;
    height: 20.4px;
    background: #f8f8f8;
    font-size: calc(24 * var(--pt));
  }
  .m .tagline {
    width: 100px;
    height: 15px;
    font-size: calc(14 * var(--pt));
  }
  .search {
    width: 188px;
    height: 25.5px;
    margin-top: 8px;
    background: #fff;
    font-size: calc(18 * var(--pt));
  }
  .m .search {
    width: 101px;
    height: 11px;
    margin-top: 4.5px;
    font-size: calc(12.5 * var(--pt));
  }
  .search span {
    box-sizing: border-box;
    height: 100%;
    display: flex;
    align-items: center;
    justify-content: center;
  }
  .box {
    flex: 1;
    border: 1px solid #333;
  }
  .go {
    width: 68px;
    border: 2px solid #000;
    background: #f8f8f8;
  }
  .m .go {
    width: 37px;
    border-width: 1.5px;
  }
  .body {
    flex: none;
  }
  .stack {
    display: flex;
    flex-direction: column;
  }
  .line {
    flex: none;
    display: flex;
    align-items: flex-start;
  }
  .cell {
    flex: none;
  }
  .txt {
    --lh: 8.7px;
    margin-top: calc(var(--lh) / -2);
    line-height: var(--lh);
    white-space: pre;
  }
  .s8 {
    font-size: calc(8 * var(--pt));
  }
  .s9 {
    font-size: calc(9 * var(--pt));
  }
  .s10 {
    --lh: 6.55px;
    font-size: calc(10 * var(--pt));
  }
  .s12 {
    font-size: calc(11.8 * var(--pt));
  }
  .s13 {
    font-size: calc(13 * var(--pt));
  }
  .s14 {
    font-size: calc(14 * var(--pt));
  }
  .s18 {
    --lh: 12px;
    font-size: calc(18 * var(--pt));
  }
  .s24 {
    --lh: 16px;
    font-size: calc(24 * var(--pt));
  }
  .bold {
    font-weight: 700;
  }
  .link {
    text-decoration: underline;
    text-decoration-color: rgba(0, 0, 0, 0.5);
    text-decoration-thickness: 0.6px;
    text-underline-offset: 0.8px;
  }
  .field,
  .btn {
    box-sizing: border-box;
    border: 1px solid #333;
    background: #fff;
  }
  .btn {
    display: flex;
    align-items: center;
    justify-content: center;
    white-space: nowrap;
    line-height: 1;
  }
  .btn.thick {
    border: 1.6px solid #000;
    background: #f8f8f8;
  }
  .btn.thin {
    border-color: #555;
  }
  .pic {
    position: relative;
    background: #c4c4c4;
  }
  .area {
    box-sizing: border-box;
    background: #f8f8f8;
    font-style: italic;
  }
  .radio {
    box-sizing: border-box;
    width: 10.4px;
    height: 10.4px;
    margin-top: -5.2px;
    border: 1px solid #000;
    border-radius: 50%;
    background: #fff;
  }
  .radio.on {
    background: radial-gradient(circle, #000 0 2.6px, #fff 3px);
  }
  .radio.small {
    width: 7px;
    height: 7px;
    margin-top: -3.5px;
  }
  .radio.small.on {
    background: radial-gradient(circle, #000 0 1.7px, #fff 2px);
  }
  .cta {
    flex: none;
    box-sizing: border-box;
    display: flex;
    flex-direction: column;
    align-items: center;
    justify-content: center;
    gap: 12px;
    padding-bottom: 6px;
    background: #c4c4c4;
    font-size: calc(18 * var(--pt));
    line-height: 12px;
  }
  .m .cta {
    gap: 6px;
    padding-bottom: 2px;
    font-size: calc(12 * var(--pt));
    line-height: 8px;
  }
  .action {
    box-sizing: border-box;
    display: flex;
    align-items: center;
    justify-content: center;
    width: 69px;
    height: 22px;
    border: 1.6px solid #000;
    background: #f8f8f8;
    font-size: calc(14 * var(--pt));
  }
  .m .action {
    width: 52px;
    height: 12px;
    font-size: calc(12 * var(--pt));
  }
  footer {
    flex: none;
    display: flex;
    flex-direction: column;
    align-items: center;
    justify-content: center;
    gap: 6px;
    background: #5c5c5c;
    color: #fff;
  }
  .m footer {
    gap: 1px;
  }
  footer strong {
    font-weight: 400;
    font-size: calc(24 * var(--pt));
    line-height: 14px;
  }
  .m footer strong {
    font-size: calc(14 * var(--pt));
    line-height: 8px;
  }
  footer small {
    font-size: calc(12 * var(--pt));
    line-height: 8px;
  }
  .m footer small {
    font-size: calc(10 * var(--pt));
  }
  .marks {
    position: absolute;
    left: 0;
    top: 0;
    width: 100%;
    height: 100%;
    overflow: visible;
  }
  .marks polyline {
    fill: none;
    stroke: #f01923;
    stroke-width: 1.2;
  }
  .marks .lead {
    stroke: #222;
    stroke-width: 0.8;
  }
  .note {
    position: absolute;
    box-sizing: border-box;
    display: flex;
    align-items: center;
    padding-bottom: 2px;
    background: #fff799;
    color: #5c5c5c;
    font: 400 16.07px/19px 'Liberation Sans', Arial, sans-serif;
    white-space: pre;
  }
</style>
